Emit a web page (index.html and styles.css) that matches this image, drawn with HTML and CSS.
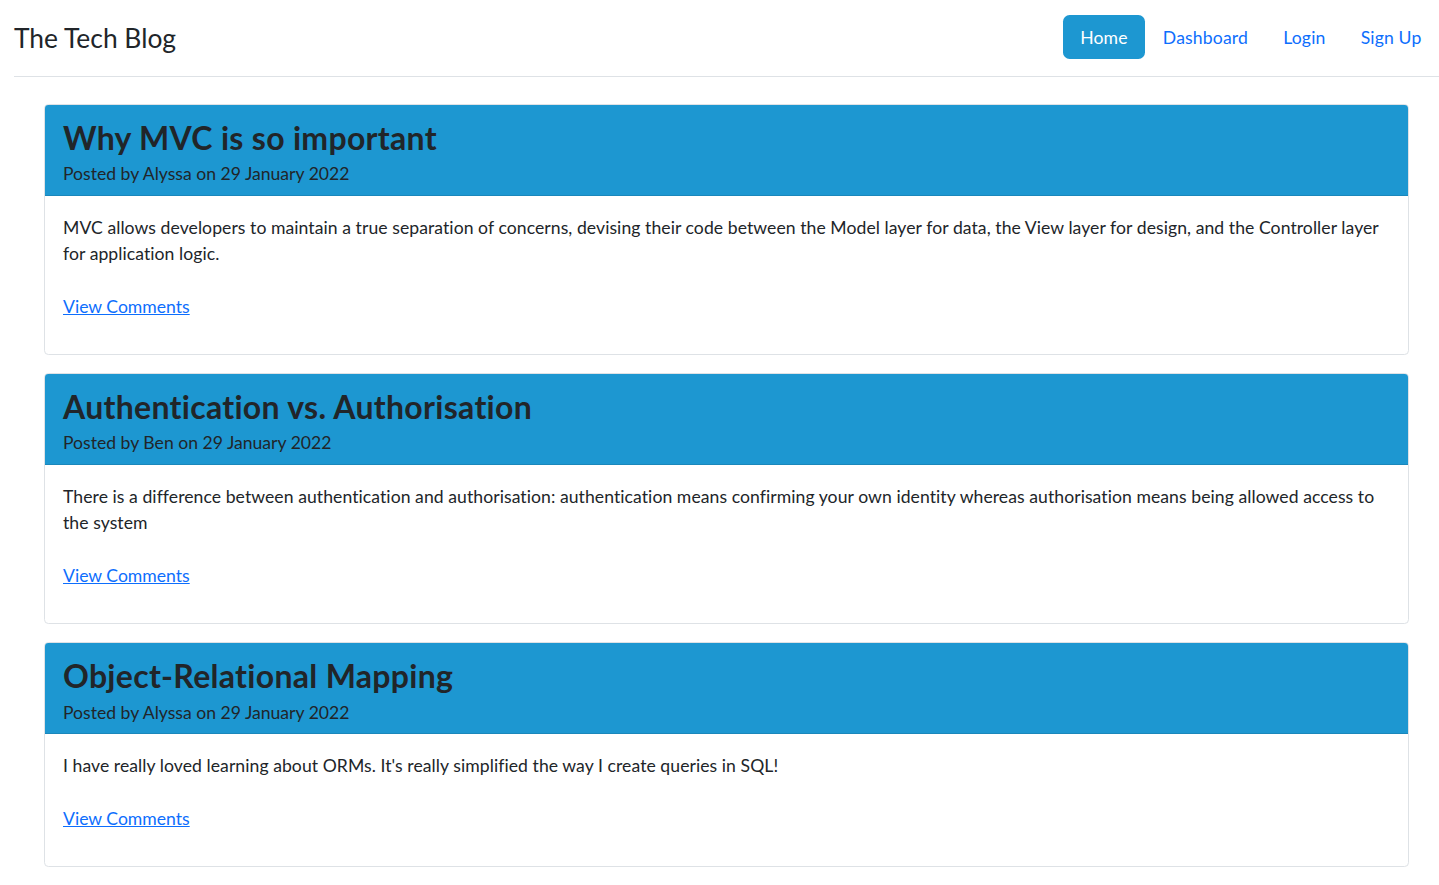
FILE: index.html
```html
<!DOCTYPE html>
<html lang="en">
<head>
<meta charset="utf-8">
<title>The Tech Blog</title>
<link rel="stylesheet" href="styles.css">
</head>
<body>
<header class="site-header">
  <a class="brand" href="#">The Tech Blog</a>
  <nav class="nav">
    <a class="nav-link active" href="#">Home</a>
    <a class="nav-link" href="#">Dashboard</a>
    <a class="nav-link" href="#">Login</a>
    <a class="nav-link" href="#">Sign Up</a>
  </nav>
</header>
<main class="posts">
  <article class="card">
    <div class="card-header">
      <h3 class="card-title">Why MVC is so important</h3>
      <p class="card-meta">Posted by Alyssa on 29 January 2022</p>
    </div>
    <div class="card-body">
      <p class="card-text">MVC allows developers to maintain a true separation of concerns, devising their code between the Model layer for data, the View layer for design, and the Controller layer for application logic.</p>
      <div class="card-link"><a href="#">View Comments</a></div>
    </div>
  </article>
  <article class="card">
    <div class="card-header">
      <h3 class="card-title">Authentication vs. Authorisation</h3>
      <p class="card-meta">Posted by Ben on 29 January 2022</p>
    </div>
    <div class="card-body">
      <p class="card-text">There is a difference between authentication and authorisation: authentication means confirming your own identity whereas authorisation means being allowed access to the system</p>
      <div class="card-link"><a href="#">View Comments</a></div>
    </div>
  </article>
  <article class="card">
    <div class="card-header">
      <h3 class="card-title">Object-Relational Mapping</h3>
      <p class="card-meta">Posted by Alyssa on 29 January 2022</p>
    </div>
    <div class="card-body">
      <p class="card-text">I have really loved learning about ORMs. It's really simplified the way I create queries in SQL!</p>
      <div class="card-link"><a href="#">View Comments</a></div>
    </div>
  </article>
</main>
</body>
</html>
```

FILE: styles.css
```css
* { box-sizing: border-box; }

html, body {
  margin: 0;
  padding: 0;
  background: #fff;
}

body {
  font-family: Lato, "Noto Sans", sans-serif;
  font-size: 17.6px;
  line-height: 26.4px;
  color: #212529;
}

.site-header {
  display: flex;
  align-items: center;
  justify-content: space-between;
  margin-left: 14px;
  padding: 15px 0 17px;
  border-bottom: 1px solid #dee2e6;
}

.brand {
  font-size: 26.4px;
  line-height: 32px;
  padding-top: 2px;
  color: #212529;
  text-decoration: none;
}

.nav {
  display: flex;
  align-items: center;
}

.nav-link {
  display: block;
  padding: 9.8px 17.6px 7.8px;
  font-size: 17.6px;
  line-height: 26.4px;
  letter-spacing: 0.15px;
  color: #0d6efd;
  text-decoration: none;
  border-radius: 6.6px;
}

.nav-link.active {
  background: #1d97d1;
  color: #fff;
}

.posts {
  margin: 27px 30px 0 44px;
}

.card {
  border: 1px solid #dee2e6;
  border-radius: 4.4px;
  margin-bottom: 18px;
  background: #fff;
}

.card-header {
  background: #1d97d1;
  border-bottom: 1px solid #1a87bb;
  border-radius: 3.4px 3.4px 0 0;
  padding: 13.6px 18px 7.3px;
}

.card-title {
  margin: 0 0 5.7px;
  font-size: 32px;
  line-height: 37px;
  letter-spacing: 0.3px;
  font-weight: 700;
  color: #212529;
}

.card-meta {
  margin: 0;
  font-size: 17.6px;
  line-height: 26.4px;
}

.card-body {
  padding: 18.6px 18px 34px;
}

.card-text {
  margin: 0 0 26.4px;
  letter-spacing: 0.06px;
}

.card-link a {
  color: #0d6efd;
  text-decoration: underline;
}
```
